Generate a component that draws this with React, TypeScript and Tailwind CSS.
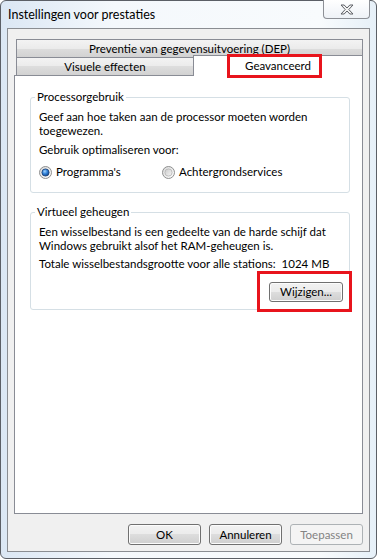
import React from 'react';

const btn =
  'flex items-center justify-center rounded-[3px] border border-[#707070] bg-[linear-gradient(to_bottom,#f2f2f2_0%,#ebebeb_50%,#dddddd_50%,#cfcfcf_100%)] shadow-[inset_0_0_0_1px_#fcfcfc] text-black';

const tabBg = 'bg-[linear-gradient(to_bottom,#f3f3f3_0%,#ebebeb_50%,#dddddd_50%,#d2d2d2_100%)]';

function Radio({ checked }: { checked?: boolean }) {
  return (
    <svg width="13" height="13" viewBox="0 0 13 13">
      <defs>
        <linearGradient id="rOuter" x1="0" y1="0" x2="1" y2="1">
          <stop offset="0" stopColor="#d8d8d8" />
          <stop offset="1" stopColor="#ffffff" />
        </linearGradient>
        <radialGradient id="rOn" cx="0.4" cy="0.35" r="0.7">
          <stop offset="0" stopColor="#9fd2ff" />
          <stop offset="0.5" stopColor="#2f7fd6" />
          <stop offset="1" stopColor="#0d3f86" />
        </radialGradient>
        <linearGradient id="rOff" x1="0" y1="0" x2="1" y2="1">
          <stop offset="0" stopColor="#cbcbcb" />
          <stop offset="1" stopColor="#f6f6f6" />
        </linearGradient>
      </defs>
      <circle cx="6.5" cy="6.5" r="6" fill="url(#rOuter)" stroke="#8e8f8f" />
      <circle cx="6.5" cy="6.5" r="3.6" fill={checked ? 'url(#rOn)' : 'url(#rOff)'} stroke={checked ? '#1c3f73' : '#b5b5b5'} strokeWidth="0.8" />
    </svg>
  );
}

export default function App() {
  return (
    <div className="w-[377px] h-[559px] bg-white font-['Segoe_UI',Lato,sans-serif] text-[11.5px] leading-[14px] text-black whitespace-nowrap">
      <div className="w-[377px] h-[559px] flex flex-col border border-[#5b5f66] rounded-[6px] bg-[linear-gradient(to_right,#dbe7f4,#f4f8fc_30%,#f8fbfd_85%,#e6f0f8)]">
        {/* titelbalk */}
        <div className="h-[27px] flex justify-between">
          <div className="pl-[7px] pt-[7px] text-[12.5px] text-black">Instellingen voor prestaties</div>
          <div className="-mt-px mr-[6px] w-[47px] h-[19px] flex items-center justify-center border border-[#8d9096] border-t-0 rounded-b-[4px] bg-[linear-gradient(to_bottom,#ffffff,#eef2f7)]">
            <svg width="14" height="11" viewBox="0 0 14 11">
              <path
                d="M1 1 H4.2 L7 4 L9.8 1 H13 L8.8 5.5 L13 10 H9.8 L7 7 L4.2 10 H1 L5.2 5.5 Z"
                fill="#f2f2f2"
                stroke="#5e6166"
                strokeWidth="1"
                strokeLinejoin="round"
              />
            </svg>
          </div>
        </div>

        {/* venster */}
        <div className="flex-1 mx-[6px] mb-[6px] border border-[#8a8d92] bg-[#f0f0f0] flex flex-col pt-[10px] pl-[6px] pr-[6px] pb-[6px]">
          <div className={`ml-[2px] h-[18px] flex items-center justify-center border border-b-0 border-[#898c95] ${tabBg}`}>
            Preventie van gegevensuitvoering (DEP)
          </div>
          <div className="ml-[2px] h-[18px] flex items-end relative z-10">
            <div className={`w-[177px] h-full flex items-center justify-center border border-b-0 border-r-0 border-[#898c95] ${tabBg}`}>
              Visuele effecten
            </div>
            <div className="relative flex-1 h-[21px] -mb-px flex items-center justify-center border border-b-0 border-[#898c95] bg-white">
              Geavanceerd
              <div className="absolute left-[33px] top-[-2px] w-[95px] h-[24px] border-[3px] border-[#e8141c]" />
            </div>
          </div>

          <div className="flex-1 border border-[#898c95] bg-white pt-[14px] pl-[15px] pr-[12px]">
            <fieldset className="border border-[#d5dfe5] rounded-[3px] pl-[8px] pr-[6px] pb-[13px]">
              <legend className="-ml-[4px] px-[2px]">Processorgebruik</legend>
              <p className="mt-[6px]">
                Geef aan hoe taken aan de processor moeten worden
                <br />
                toegewezen.
              </p>
              <p className="mt-[5px]">Gebruik optimaliseren voor:</p>
              <div className="mt-[8px] flex items-center">
                <div className="w-[123px] flex items-center gap-[4px]">
                  <Radio checked />
                  <span>Programma's</span>
                </div>
                <div className="flex items-center gap-[4px]">
                  <Radio />
                  <span>Achtergrondservices</span>
                </div>
              </div>
            </fieldset>

            <fieldset className="mt-[12px] border border-[#d5dfe5] rounded-[3px] pl-[8px] pr-[6px] pb-[7px] flex flex-col">
              <legend className="-ml-[4px] px-[2px]">Virtueel geheugen</legend>
              <p className="mt-[6px]">
                Een wisselbestand is een gedeelte van de harde schijf dat
                <br />
                Windows gebruikt alsof het RAM-geheugen is.
              </p>
              <p className="mt-[4px]">Totale wisselbestandsgrootte voor alle stations:&nbsp;&nbsp;1024 MB</p>
              <div className="mt-[11px] flex justify-end">
                <div className="relative">
                  <button className={`${btn} w-[74px] h-[20px]`}>Wijzigen...</button>
                  <div className="absolute left-[-12px] top-[-11px] w-[95px] h-[41px] border-[3px] border-[#e8141c]" />
                </div>
              </div>
            </fieldset>
          </div>

          <div className="mt-[10px] flex justify-end gap-[8px]">
            <button className={`${btn} w-[73px] h-[21px]`}>OK</button>
            <button className={`${btn} w-[73px] h-[21px]`}>Annuleren</button>
            <button className="w-[73px] h-[21px] flex items-center justify-center rounded-[3px] border border-[#adb2b5] bg-[#f4f4f4] text-[#838383]">
              Toepassen
            </button>
          </div>
        </div>
      </div>
    </div>
  );
}
